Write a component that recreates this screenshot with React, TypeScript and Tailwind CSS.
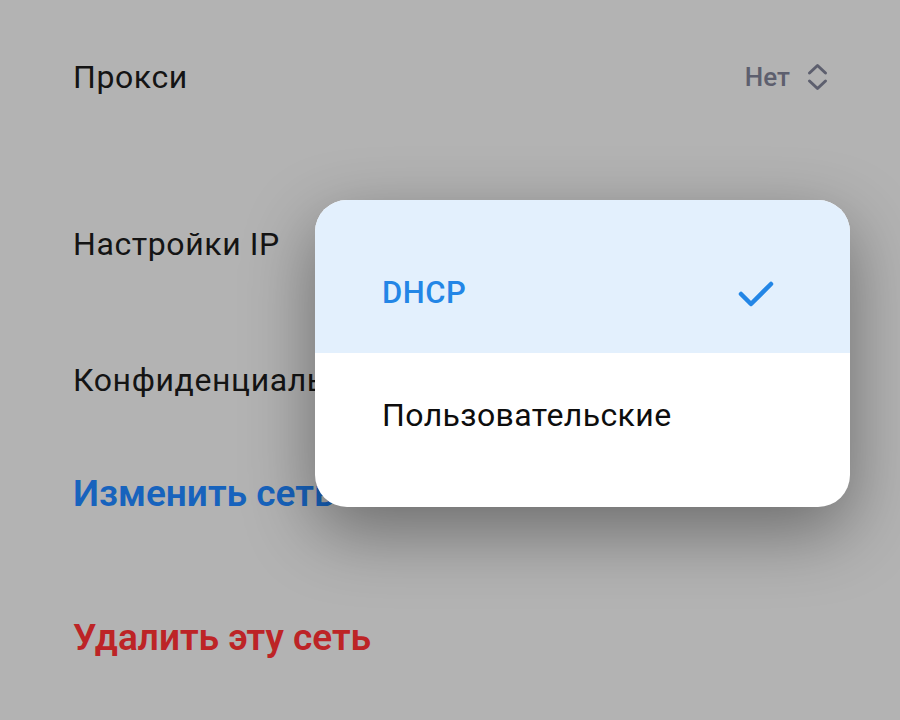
import React from 'react';

export default function App() {
  return (
    <div
      className="relative w-[900px] h-[720px] overflow-hidden bg-[#b3b3b3]"
      style={{ fontFamily: 'Roboto, "Noto Sans", sans-serif' }}
    >
      {/* settings list under the dimmed overlay */}
      <div className="flex flex-col pl-[73px] pr-[72px]">
        <div className="flex items-center justify-between mt-[58px] h-[38px]">
          <span className="text-[32px] tracking-[0.6px] text-[#141414]">Прокси</span>
          <span className="flex items-center gap-[17px] text-[26px] font-medium text-[#5d5f6e]">
            Нет
            <svg width="21" height="28" viewBox="0 0 21 28" fill="none" stroke="#5d5f6e" strokeWidth="3" strokeLinecap="round" strokeLinejoin="round">
              <path d="M2.5 10 10.5 2.5 18.5 10" />
              <path d="M2.5 18 10.5 25.5 18.5 18" />
            </svg>
          </span>
        </div>
        <div className="mt-[129px] h-[38px] flex items-center">
          <span className="text-[32px] tracking-[0.6px] text-[#141414]">Настройки IP</span>
        </div>
        <div className="mt-[98px] h-[38px] flex items-center">
          <span className="text-[32px] tracking-[0.6px] text-[#141414]">Конфиденциальность</span>
        </div>
        <div className="mt-[72px] h-[46px] flex items-center">
          <span className="text-[37px] font-semibold text-[#1763bd]">Изменить сеть</span>
        </div>
        <div className="mt-[98px] h-[46px] flex items-center">
          <span className="text-[37px] font-semibold text-[#bd2426]">Удалить эту сеть</span>
        </div>
      </div>

      {/* IP settings picker */}
      <div className="absolute left-[315px] top-[200px] w-[535px] h-[307px] rounded-[32px] overflow-hidden bg-white shadow-[0_24px_70px_rgba(0,0,0,0.4)]">
        <div className="flex items-center justify-between h-[153px] pt-[34px] pl-[67px] pr-[76px] bg-[#e3f0fd]">
          <span className="text-[31px] font-medium tracking-[0.5px] text-[#2386e6]">DHCP</span>
          <svg width="36" height="28" viewBox="0 0 36 28" fill="none" stroke="#2386e6" strokeWidth="4.5" strokeLinecap="round" strokeLinejoin="round">
            <path d="M3 14 13 24 33 4" />
          </svg>
        </div>
        <div className="flex items-center pl-[67px] pt-[46px]">
          <span className="text-[32px] tracking-[0.4px] text-[#0d0d0d] leading-[33px]">Пользовательские</span>
        </div>
      </div>
    </div>
  );
}
